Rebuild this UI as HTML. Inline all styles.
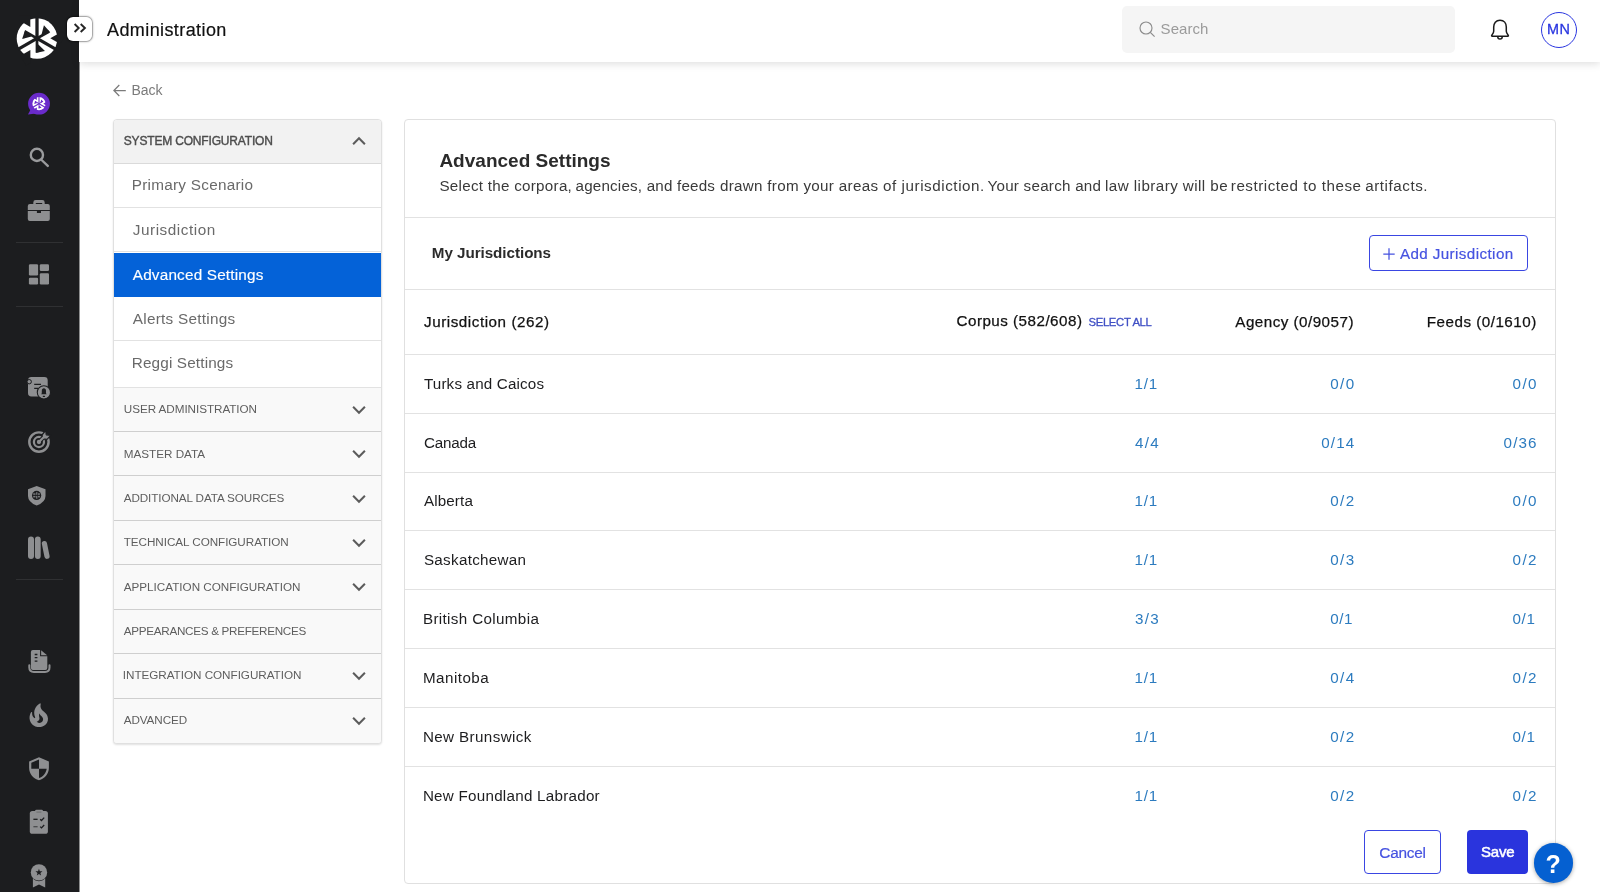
<!DOCTYPE html>
<html lang="en">
<head>
<meta charset="utf-8">
<title>Administration</title>
<style>
*{box-sizing:border-box;margin:0;padding:0}
html,body{width:1600px;height:892px;overflow:hidden;background:#fff;font-family:"Liberation Sans",sans-serif;color:#1d1d1f}
.x{position:absolute;white-space:pre;line-height:20px;height:20px}
#side{position:absolute;left:0;top:0;width:79px;box-shadow:1px 0 0 rgba(28,29,31,.5);height:892px;background:#1c1d1f}
#side svg{position:absolute}
#side .sep{position:absolute;left:16px;width:47px;height:1px;background:#2f3032}
#top{position:absolute;left:79px;top:0;width:1521px;height:62px;background:#fff;box-shadow:0 2px 8px rgba(0,0,0,.13)}
#toggle{position:absolute;left:65.6px;top:15.6px;width:27.8px;height:26.2px;background:#fff;background-clip:padding-box;border:1px solid rgba(0,0,0,.14);border-radius:7px;box-shadow:0 0 2px rgba(0,0,0,.3)}
#toggle svg{position:absolute;left:6.5px;top:6.3px}
#search{position:absolute;left:1122px;top:6px;width:333px;height:46.5px;background:#f5f5f5;border-radius:5px}
#search svg{position:absolute;left:15.6px;top:14.1px}
#bell{position:absolute;left:1489px;top:17.6px}
#avatar{position:absolute;left:1541px;top:11.5px;width:36px;height:36px;border:1.2px solid #2a36e0;border-radius:50%}
#backarrow{position:absolute;left:113px;top:83.5px}
#nav{position:absolute;left:113px;top:119px;width:269px;height:625px;border:1px solid #e0e0e0;border-radius:4px;background:#fff;box-shadow:0 1px 2px rgba(0,0,0,.12);overflow:hidden}
#nav .row{position:absolute;left:0;width:267px;border-bottom:1px solid #e2e2e2}
#nav .hd{background:#f9f9f9;border-bottom-color:#cfcfcf}
#nav .hd.first{background:#f2f2f2;border-bottom-color:#dadada}
#nav .hd.last{border-bottom:none}
#nav .it{background:#fff}
#nav .it.act{background:#0462d8;border-top:1px solid #fff;border-bottom:none}
.chev{position:absolute}
#main{position:absolute;left:404px;top:119px;width:1152px;height:765px;border:1px solid #e0e0e0;border-radius:4px;background:#fff}
.hl{position:absolute;left:405px;width:1150px;height:1px;background:#e2e2e2}
.btn{position:absolute;border-radius:4px}
.addj{left:1369px;top:235px;width:159px;height:36px;border:1.3px solid #3a46e2}
.cancel{left:1364px;top:830px;width:77px;height:44px;border:1.3px solid #3a46e2}
.save{left:1467px;top:830px;width:61px;height:44px;background:#2a34dd}
#help{position:absolute;left:1533.7px;top:843.4px;width:39.4px;height:39.4px;border-radius:50%;background:#0560d1;box-shadow:0 1px 4px rgba(0,0,0,.35)}
#txt{position:absolute;left:0;top:0;width:1600px;height:892px;will-change:transform}
</style>
</head>
<body>
<div id="side">
<svg width="80" height="892" viewBox="0 0 80 892" style="left:0;top:0">
<defs>

<g id="zlogo">
<g id="zsec">
<rect x="-1.65" y="-22" width="3.3" height="22"/>
<polygon points="0.7,-1.2 -0.7,1.2 -12.8,-5.8 -11.4,-8.2"/>
<polygon points="-11.9,-8.4 -14.9,0.6 -5.6,-2.0"/>
<polygon points="-6.7,-11.5 -6.7,-23 -18,-23 -18,-18.1"/>
</g>
<use href="#zsec" transform="rotate(120)"/>
<use href="#zsec" transform="rotate(240)"/>
</g>
</defs>
<!-- logo -->
<circle cx="37" cy="38.5" r="20.3" fill="#fff"/>
<use href="#zlogo" transform="translate(37,38.4)" fill="#1c1d1f"/>
<!-- chat bubble -->
<path d="M28 114.6 L30.6 109.5 L36 113.6 Z" fill="#6a2bcb"/>
<circle cx="39" cy="103.7" r="10.9" fill="#6a2bcb"/>
<circle cx="39" cy="103.7" r="6.6" fill="#fff"/>
<use href="#zlogo" transform="translate(39,103.7) scale(0.325)" fill="#6a2bcb"/>
<!-- search -->
<circle cx="36.9" cy="154.9" r="6.1" fill="none" stroke="#9a9b9d" stroke-width="2.4"/>
<path d="M41.6 160 L47.8 165.9" stroke="#9a9b9d" stroke-width="2.4" stroke-linecap="round" fill="none"/>
<!-- briefcase -->
<g fill="#8e8f91">
<path d="M33.3 205 V202.4 Q33.3 200 35.7 200 H42.3 Q44.7 200 44.7 202.4 V205 H42.2 V203 H35.8 V205 Z"/>
<path d="M27.8 206 Q27.8 204 29.8 204 H47.8 Q49.8 204 49.8 206 V210.1 H27.8 Z"/>
<path d="M27.8 211.1 H36.9 V213.1 H41 V211.1 H49.8 V219 Q49.8 221 47.8 221 H29.8 Q27.8 221 27.8 219 Z"/>
</g>
<!-- dashboard -->
<g fill="#8e8f91">
<rect x="28.9" y="264.3" width="9.2" height="11.2" rx="1.2"/>
<rect x="28.9" y="277.8" width="9.2" height="6.7" rx="1.2"/>
<rect x="39.8" y="264.3" width="9.2" height="6.6" rx="1.2"/>
<rect x="39.8" y="273.3" width="9.2" height="11.2" rx="1.2"/>
</g>
<!-- doc bell -->
<rect x="28" y="377" width="19.7" height="19.5" rx="3.4" fill="#8e8f91"/>
<circle cx="29.2" cy="381.7" r="2.2" fill="#8e8f91" stroke="#1c1d1f" stroke-width="1"/>
<path d="M34.2 384.4 H41 M34.2 388.4 H38" stroke="#1c1d1f" stroke-width="1.2" fill="none"/>
<circle cx="43.9" cy="392.4" r="6.6" fill="#8e8f91" stroke="#1c1d1f" stroke-width="1.1"/>
<path d="M41.2 394.3 L41.8 393.2 V391 Q41.8 388.2 43.9 388.2 Q46 388.2 46 391 V393.2 L46.6 394.3 Z" fill="#1c1d1f"/>
<rect x="42.7" y="395.7" width="2.4" height="1.2" rx=".6" fill="#1c1d1f"/>
<!-- target -->
<circle cx="38.95" cy="442" r="9.65" fill="none" stroke="#8e8f91" stroke-width="2.45"/>
<circle cx="38.95" cy="442" r="5.05" fill="none" stroke="#8e8f91" stroke-width="2.25"/>
<circle cx="38.95" cy="442" r="2.15" fill="#8e8f91"/>
<path d="M40.6 440.3 L44 436.6" stroke="#1c1d1f" stroke-width="4.2" fill="none"/>
<polygon points="45.7,430.4 46.2,434.8 50.8,435.3 47,439.4 43,438.9 42,435" fill="#8e8f91" stroke="#1c1d1f" stroke-width="1.2" stroke-linejoin="round"/>
<path d="M38.95 442 L44.6 436.2" stroke="#8e8f91" stroke-width="2.2" fill="none"/>
<!-- shield globe -->
<path d="M36.7 486 L45.5 489.2 V496 Q45.5 502.2 36.7 505.6 Q28 502.2 28 496 V489.2 Z" fill="#8e8f91"/>
<circle cx="36.6" cy="495.4" r="4.6" fill="#1c1d1f"/>
<g fill="#77787a"><rect x="33.2" y="493.3" width="2.3" height="1.5"/><rect x="36.1" y="492.2" width="1.3" height="2.6"/><rect x="38" y="493.3" width="1.9" height="1.5"/><rect x="33.2" y="495.9" width="2.3" height="1.5"/><rect x="36.1" y="495.9" width="1.3" height="2.8"/><rect x="38" y="495.9" width="1.9" height="1.5"/></g>
<!-- books -->
<rect x="28" y="536.5" width="6" height="22.5" rx="3" fill="#8e8f91"/>
<rect x="34.9" y="536.5" width="5.8" height="22.5" rx="2.9" fill="#8e8f91"/>
<path d="M44.4 543.6 L47 556.3" stroke="#8e8f91" stroke-width="5.2" stroke-linecap="round" fill="none"/>
<!-- doc stack -->
<path d="M30.9 652 Q30.9 650 32.9 650 H40.1 V656.3 H47.3 V668 Q47.3 670 45.3 670 H32.9 Q30.9 670 30.9 668 Z" fill="#8e8f91"/>
<path d="M41.1 650.2 L47.1 655.3 H41.1 Z" fill="#8e8f91"/>
<path d="M34.7 654.5 H37.4 M34.7 657.7 H37.4 M34.7 661.2 H37.4" stroke="#1c1d1f" stroke-width="1.3" fill="none"/>
<path d="M29.3 665.3 V667.6 Q29.3 672 33.8 672 H45 Q49.5 672 49.5 667.6 V665.3" stroke="#8e8f91" stroke-width="2" fill="none" stroke-linecap="round"/>
<!-- fire -->
<path transform="translate(24.9,701.6) scale(1.156)" fill="#8e8f91" d="M19.48,12.35c-1.57-4.08-7.16-4.3-5.81-10.23c0.1-0.44-0.37-0.78-0.75-0.55C9.29,3.71,6.68,8,8.87,13.62 c0.18,0.46-0.36,0.89-0.75,0.59c-1.81-1.37-2-3.34-1.84-4.75c0.06-0.52-0.62-0.77-0.91-0.34C4.69,10.16,4,11.84,4,14.37 c0.38,5.6,5.11,7.32,6.81,7.54c2.43,0.31,5.06-0.14,6.95-1.87C19.84,18.11,20.6,15.03,19.48,12.35z M10.2,17.38 c1.44-0.35,2.18-1.39,2.38-2.31c0.33-1.43-0.96-2.83-0.09-5.09c0.33,1.87,3.27,3.04,3.27,5.08C15.84,17.59,13.1,19.76,10.2,17.38z"/>
<!-- shield -->
<path transform="translate(25.8,756.2) scale(1.1,1.045)" fill="#8e8f91" d="M12 1L3 5v6c0 5.55 3.84 10.74 9 12 5.16-1.26 9-6.45 9-12V5l-9-4zm0 10.99h7c-.53 4.12-3.28 7.79-7 8.94V12H5V6.3l7-3.11v8.8z"/>
<!-- clipboard -->
<rect x="29.8" y="811" width="18.1" height="22.8" rx="2.6" fill="#8e8f91"/>
<rect x="35.1" y="809.7" width="7.9" height="3.4" rx="1.4" fill="#8e8f91"/>
<path d="M36.4 812.1 H41.4" stroke="#6d6e70" stroke-width="1" fill="none"/>
<path d="M33.4 819.3 H37.6" stroke="#1c1d1f" stroke-width="1.3" fill="none"/>
<path d="M33.4 826.7 H37.6" stroke="#4a4b4d" stroke-width="1.3" fill="none"/>
<path d="M40.2 819.2 L41.5 820.5 L44.2 817.6 M40.2 826.6 L41.5 827.9 L44.2 825" stroke="#1c1d1f" stroke-width="1.3" fill="none"/>
<!-- award -->
<path d="M32.9 878 H45.2 V887.6 L39 884.6 L32.9 887.6 Z" fill="#8e8f91"/>
<circle cx="38.95" cy="872.4" r="8.8" fill="#1c1d1f"/>
<circle cx="38.95" cy="872.4" r="8.2" fill="#8e8f91"/>
<polygon points="38.95,868.7 39.85,871.2 42.45,871.3 40.4,872.9 41.1,875.4 38.95,873.95 36.8,875.4 37.5,872.9 35.45,871.3 38.05,871.2" fill="#1c1d1f"/>
</svg>
<div class="sep" style="top:242px"></div>
<div class="sep" style="top:306px"></div>
<div class="sep" style="top:579px"></div>
</div>
<div id="top"></div>
<div id="toggle"><svg width="14" height="10" viewBox="0 0 14 10"><path d="M1.6 1 L5.7 5 L1.6 9 M7.7 1 L11.9 5 L7.7 9" fill="none" stroke="#262626" stroke-width="1.9"/></svg></div>
<div id="search"><svg width="20" height="20" viewBox="0 0 20 20"><circle cx="8" cy="8" r="6" fill="none" stroke="#8c8c8c" stroke-width="1.15"/><path d="M12.3 12.3 L16.6 16.6" stroke="#8c8c8c" stroke-width="1.2" fill="none"/></svg></div>
<svg id="bell" width="22" height="24" viewBox="0 0 22 24"><path d="M11 2.2 C6.9 2.2 4.7 5.2 4.7 9 L4.7 13.2 C4.7 14.9 3.8 16 2.8 17.2 C2.4 17.7 2.6 18.3 3.3 18.3 L18.7 18.3 C19.4 18.3 19.6 17.7 19.2 17.2 C18.2 16 17.3 14.9 17.3 13.2 L17.3 9 C17.3 5.2 15.1 2.2 11 2.2 Z" fill="none" stroke="#1a1a1a" stroke-width="1.5" stroke-linejoin="round"/><path d="M8.7 18.6 C8.7 20.1 9.7 21.1 11 21.1 C12.3 21.1 13.3 20.1 13.3 18.6" fill="none" stroke="#1a1a1a" stroke-width="1.4"/></svg>
<div id="avatar"></div>
<svg id="backarrow" width="14" height="13" viewBox="0 0 14 13"><path d="M6.3 1 L0.9 6.5 L6.3 12 M0.9 6.5 L12.8 6.5" fill="none" stroke="#7b7b7b" stroke-width="1.25"/></svg>
<div id="nav">
<div class="row hd first" style="top:0px;height:44px"></div>
<div class="row it" style="top:44px;height:44px"></div>
<div class="row it" style="top:88px;height:44px"></div>
<div class="row it act" style="top:132px;height:45px"></div>
<div class="row it" style="top:177px;height:44px"></div>
<div class="row it" style="top:221px;height:47px"></div>
<div class="row hd" style="top:268px;height:44px"></div>
<div class="row hd" style="top:312px;height:44px"></div>
<div class="row hd" style="top:356px;height:45px"></div>
<div class="row hd" style="top:401px;height:44px"></div>
<div class="row hd" style="top:445px;height:45px"></div>
<div class="row hd" style="top:490px;height:44px"></div>
<div class="row hd" style="top:534px;height:45px"></div>
<div class="row hd last" style="top:579px;height:44px"></div>
</div>
<svg class="chev" width="16" height="10" viewBox="0 0 16 10" style="left:350.8px;top:135.7px"><path d="M2.1 8.3 L8 2.2 L13.9 8.3" fill="none" stroke="#5c5c5c" stroke-width="2"/></svg>
<svg class="chev" width="16" height="10" viewBox="0 0 16 10" style="left:350.8px;top:404.6px"><path d="M2.1 1.7 L8 7.8 L13.9 1.7" fill="none" stroke="#5c5c5c" stroke-width="2"/></svg>
<svg class="chev" width="16" height="10" viewBox="0 0 16 10" style="left:350.8px;top:449.07px"><path d="M2.1 1.7 L8 7.8 L13.9 1.7" fill="none" stroke="#5c5c5c" stroke-width="2"/></svg>
<svg class="chev" width="16" height="10" viewBox="0 0 16 10" style="left:350.8px;top:493.54px"><path d="M2.1 1.7 L8 7.8 L13.9 1.7" fill="none" stroke="#5c5c5c" stroke-width="2"/></svg>
<svg class="chev" width="16" height="10" viewBox="0 0 16 10" style="left:350.8px;top:538.01px"><path d="M2.1 1.7 L8 7.8 L13.9 1.7" fill="none" stroke="#5c5c5c" stroke-width="2"/></svg>
<svg class="chev" width="16" height="10" viewBox="0 0 16 10" style="left:350.8px;top:582.48px"><path d="M2.1 1.7 L8 7.8 L13.9 1.7" fill="none" stroke="#5c5c5c" stroke-width="2"/></svg>
<svg class="chev" width="16" height="10" viewBox="0 0 16 10" style="left:350.8px;top:671.42px"><path d="M2.1 1.7 L8 7.8 L13.9 1.7" fill="none" stroke="#5c5c5c" stroke-width="2"/></svg>
<svg class="chev" width="16" height="10" viewBox="0 0 16 10" style="left:350.8px;top:715.89px"><path d="M2.1 1.7 L8 7.8 L13.9 1.7" fill="none" stroke="#5c5c5c" stroke-width="2"/></svg>
<div id="main">
</div>
<div class="hl" style="top:217px"></div>
<div class="hl" style="top:289px"></div>
<div class="hl" style="top:354px"></div>
<div class="hl" style="top:413px"></div>
<div class="hl" style="top:472px"></div>
<div class="hl" style="top:530px"></div>
<div class="hl" style="top:589px"></div>
<div class="hl" style="top:648px"></div>
<div class="hl" style="top:707px"></div>
<div class="hl" style="top:766px"></div>
<div class="btn addj"></div>
<svg class="chev" width="14" height="14" viewBox="0 0 14 14" style="left:1382.2px;top:247.1px"><path d="M7 1.3 V12.7 M1.3 7 H12.7" stroke="#4552e0" stroke-width="1.25" fill="none"/></svg>
<div class="btn cancel"></div>
<div class="btn save"></div>
<div id="help"></div>
<div id="txt">
<span class="x" style="left:107.00px;top:20.00px;font-size:18px;letter-spacing:0.405px;color:#111;-webkit-text-stroke:0.2px #111">Administration</span>
<span class="x" style="left:1160.60px;top:19.00px;font-size:15px;letter-spacing:0.063px;color:#9b9b9b">Search</span>
<span class="x" style="left:1546.90px;top:19.00px;font-size:14.4px;letter-spacing:0.712px;color:#2a36e0;-webkit-text-stroke:0.3px #2a36e0">MN</span>
<span class="x" style="left:131.50px;top:80.00px;font-size:14px;letter-spacing:-0.075px;color:#7b7b7b">Back</span>
<span class="x" style="left:123.75px;top:131.00px;font-size:12px;letter-spacing:-0.173px;color:#4d4d4d;-webkit-text-stroke:0.4px #4d4d4d">SYSTEM CONFIGURATION</span>
<span class="x" style="left:131.75px;top:175.00px;font-size:15.3px;letter-spacing:0.263px;color:#6a6a6a">Primary Scenario</span>
<span class="x" style="left:132.75px;top:220.00px;font-size:15.3px;letter-spacing:0.545px;color:#6a6a6a">Jurisdiction</span>
<span class="x" style="left:132.75px;top:265.00px;font-size:15.3px;letter-spacing:0.193px;color:#ffffff;-webkit-text-stroke:0.15px #ffffff">Advanced Settings</span>
<span class="x" style="left:132.75px;top:309.00px;font-size:15.3px;letter-spacing:0.277px;color:#6a6a6a">Alerts Settings</span>
<span class="x" style="left:131.75px;top:353.00px;font-size:15.3px;letter-spacing:0.147px;color:#6a6a6a">Reggi Settings</span>
<span class="x" style="left:123.75px;top:399.00px;font-size:11.7px;letter-spacing:-0.05px;color:#5e5e5e">USER ADMINISTRATION</span>
<span class="x" style="left:123.75px;top:444.00px;font-size:11.7px;letter-spacing:-0.009px;color:#5e5e5e">MASTER DATA</span>
<span class="x" style="left:123.75px;top:488.00px;font-size:11.7px;letter-spacing:-0.101px;color:#5e5e5e">ADDITIONAL DATA SOURCES</span>
<span class="x" style="left:123.75px;top:532.00px;font-size:11.7px;letter-spacing:-0.055px;color:#5e5e5e">TECHNICAL CONFIGURATION</span>
<span class="x" style="left:123.75px;top:577.00px;font-size:11.7px;letter-spacing:-0.006px;color:#5e5e5e">APPLICATION CONFIGURATION</span>
<span class="x" style="left:123.75px;top:621.00px;font-size:11.7px;letter-spacing:-0.296px;color:#5e5e5e">APPEARANCES &amp; PREFERENCES</span>
<span class="x" style="left:122.75px;top:665.00px;font-size:11.7px;letter-spacing:-0.03px;color:#5e5e5e">INTEGRATION CONFIGURATION</span>
<span class="x" style="left:123.75px;top:710.00px;font-size:11.7px;letter-spacing:-0.098px;color:#5e5e5e">ADVANCED</span>
<span class="x" style="left:439.40px;top:151.00px;font-size:19px;letter-spacing:0.008px;color:#2b2b2b;font-weight:bold">Advanced Settings</span>
<span class="x" style="left:439.40px;top:176.00px;font-size:15.2px;letter-spacing:0.275px;color:#3a3a3a">Select the corpora,</span>
<span class="x" style="left:575.50px;top:176.00px;font-size:15.2px;letter-spacing:0.192px;color:#3a3a3a">agencies, and feeds</span>
<span class="x" style="left:719.90px;top:176.00px;font-size:15.2px;letter-spacing:0.308px;color:#3a3a3a">drawn from your areas</span>
<span class="x" style="left:883.00px;top:176.00px;font-size:15.2px;letter-spacing:0.564px;color:#3a3a3a">of jurisdiction.</span>
<span class="x" style="left:987.50px;top:176.00px;font-size:15.2px;letter-spacing:0.243px;color:#3a3a3a">Your search and</span>
<span class="x" style="left:1105.00px;top:176.00px;font-size:15.2px;letter-spacing:0.437px;color:#3a3a3a">law library will be</span>
<span class="x" style="left:1230.80px;top:176.00px;font-size:15.2px;letter-spacing:0.53px;color:#3a3a3a">restricted to these</span>
<span class="x" style="left:1365.20px;top:176.00px;font-size:15.2px;letter-spacing:0.548px;color:#3a3a3a">artifacts.</span>
<span class="x" style="left:431.80px;top:243.00px;font-size:15.2px;letter-spacing:-0.039px;color:#2b2b2b;font-weight:bold">My Jurisdictions</span>
<span class="x" style="left:1399.90px;top:244.00px;font-size:15.2px;letter-spacing:0.406px;color:#4552e0;-webkit-text-stroke:0.2px #4552e0">Add Jurisdiction</span>
<span class="x" style="left:424.00px;top:312.00px;font-size:15.2px;letter-spacing:0.554px;color:#111;-webkit-text-stroke:0.25px #111">Jurisdiction (262)</span>
<span class="x" style="left:956.50px;top:311.00px;font-size:15.2px;letter-spacing:0.484px;color:#111;-webkit-text-stroke:0.25px #111">Corpus (582/608)</span>
<span class="x" style="left:1088.50px;top:312.00px;font-size:11.3px;letter-spacing:-0.334px;color:#3f4fc4;-webkit-text-stroke:0.3px #3f4fc4">SELECT ALL</span>
<span class="x" style="left:1235.30px;top:312.00px;font-size:15.2px;letter-spacing:0.48px;color:#111;-webkit-text-stroke:0.25px #111">Agency (0/9057)</span>
<span class="x" style="left:1426.80px;top:312.00px;font-size:15.2px;letter-spacing:0.497px;color:#111;-webkit-text-stroke:0.25px #111">Feeds (0/1610)</span>
<span class="x" style="left:423.90px;top:374.00px;font-size:15.2px;letter-spacing:0.172px;color:#1d1d1f">Turks and Caicos</span>
<span class="x" style="left:1134.50px;top:374.00px;font-size:15.2px;letter-spacing:0.767px;color:#2c7bbf">1/1</span>
<span class="x" style="left:1330.30px;top:374.00px;font-size:15.2px;letter-spacing:1.367px;color:#2c7bbf">0/0</span>
<span class="x" style="left:1512.60px;top:374.00px;font-size:15.2px;letter-spacing:1.367px;color:#2c7bbf">0/0</span>
<span class="x" style="left:423.90px;top:433.00px;font-size:15.2px;letter-spacing:-0.191px;color:#1d1d1f">Canada</span>
<span class="x" style="left:1134.90px;top:433.00px;font-size:15.2px;letter-spacing:1.367px;color:#2c7bbf">4/4</span>
<span class="x" style="left:1321.30px;top:433.00px;font-size:15.2px;letter-spacing:1.096px;color:#2c7bbf">0/14</span>
<span class="x" style="left:1503.60px;top:433.00px;font-size:15.2px;letter-spacing:1.096px;color:#2c7bbf">0/36</span>
<span class="x" style="left:423.90px;top:491.00px;font-size:15.2px;letter-spacing:0.138px;color:#1d1d1f">Alberta</span>
<span class="x" style="left:1134.50px;top:491.00px;font-size:15.2px;letter-spacing:0.767px;color:#2c7bbf">1/1</span>
<span class="x" style="left:1330.30px;top:491.00px;font-size:15.2px;letter-spacing:1.367px;color:#2c7bbf">0/2</span>
<span class="x" style="left:1512.60px;top:491.00px;font-size:15.2px;letter-spacing:1.367px;color:#2c7bbf">0/0</span>
<span class="x" style="left:423.90px;top:550.00px;font-size:15.2px;letter-spacing:0.306px;color:#1d1d1f">Saskatchewan</span>
<span class="x" style="left:1134.50px;top:550.00px;font-size:15.2px;letter-spacing:0.767px;color:#2c7bbf">1/1</span>
<span class="x" style="left:1330.30px;top:550.00px;font-size:15.2px;letter-spacing:1.367px;color:#2c7bbf">0/3</span>
<span class="x" style="left:1512.60px;top:550.00px;font-size:15.2px;letter-spacing:1.367px;color:#2c7bbf">0/2</span>
<span class="x" style="left:422.90px;top:609.00px;font-size:15.2px;letter-spacing:0.358px;color:#1d1d1f">British Columbia</span>
<span class="x" style="left:1134.90px;top:609.00px;font-size:15.2px;letter-spacing:1.367px;color:#2c7bbf">3/3</span>
<span class="x" style="left:1330.30px;top:609.00px;font-size:15.2px;letter-spacing:0.567px;color:#2c7bbf">0/1</span>
<span class="x" style="left:1512.60px;top:609.00px;font-size:15.2px;letter-spacing:0.567px;color:#2c7bbf">0/1</span>
<span class="x" style="left:422.90px;top:668.00px;font-size:15.2px;letter-spacing:0.481px;color:#1d1d1f">Manitoba</span>
<span class="x" style="left:1134.50px;top:668.00px;font-size:15.2px;letter-spacing:0.767px;color:#2c7bbf">1/1</span>
<span class="x" style="left:1330.30px;top:668.00px;font-size:15.2px;letter-spacing:1.367px;color:#2c7bbf">0/4</span>
<span class="x" style="left:1512.60px;top:668.00px;font-size:15.2px;letter-spacing:1.367px;color:#2c7bbf">0/2</span>
<span class="x" style="left:422.90px;top:727.00px;font-size:15.2px;letter-spacing:0.391px;color:#1d1d1f">New Brunswick</span>
<span class="x" style="left:1134.50px;top:727.00px;font-size:15.2px;letter-spacing:0.767px;color:#2c7bbf">1/1</span>
<span class="x" style="left:1330.30px;top:727.00px;font-size:15.2px;letter-spacing:1.367px;color:#2c7bbf">0/2</span>
<span class="x" style="left:1512.60px;top:727.00px;font-size:15.2px;letter-spacing:0.567px;color:#2c7bbf">0/1</span>
<span class="x" style="left:422.90px;top:786.00px;font-size:15.2px;letter-spacing:0.255px;color:#1d1d1f">New Foundland Labrador</span>
<span class="x" style="left:1134.50px;top:786.00px;font-size:15.2px;letter-spacing:0.767px;color:#2c7bbf">1/1</span>
<span class="x" style="left:1330.30px;top:786.00px;font-size:15.2px;letter-spacing:1.367px;color:#2c7bbf">0/2</span>
<span class="x" style="left:1512.60px;top:786.00px;font-size:15.2px;letter-spacing:1.367px;color:#2c7bbf">0/2</span>
<span class="x" style="left:1379.30px;top:843.00px;font-size:15.4px;letter-spacing:-0.238px;color:#4552e0;-webkit-text-stroke:0.2px #4552e0">Cancel</span>
<span class="x" style="left:1481.00px;top:842.00px;font-size:15px;letter-spacing:-0.216px;color:#ffffff;-webkit-text-stroke:0.5px #ffffff">Save</span>
<span class="x" style="left:1545.40px;top:854.00px;font-size:25px;letter-spacing:0px;color:#ffffff;font-weight:bold">?</span>
</div>
</body>
</html>
